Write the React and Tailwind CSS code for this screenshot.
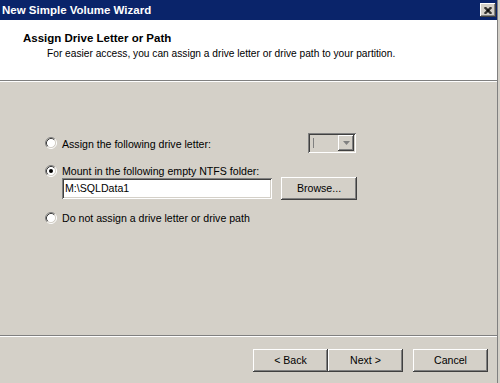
import React from "react";

const raised =
  "shadow-[inset_-1px_-1px_#404040,inset_1px_1px_#ffffff,inset_-2px_-2px_#808080,inset_2px_2px_#d4d0c8]";
const sunken =
  "shadow-[inset_1px_1px_#808080,inset_-1px_-1px_#ffffff,inset_2px_2px_#404040,inset_-2px_-2px_#d4d0c8]";

const Radio = ({ checked }) => (
  <svg width="12" height="12" viewBox="0 0 12 12" className="shrink-0">
    <circle cx="6" cy="6" r="4.5" fill="#ffffff" />
    <path d="M2.11 9.89 A5.5 5.5 0 0 1 9.89 2.11" fill="none" stroke="#808080" />
    <path d="M9.89 2.11 A5.5 5.5 0 0 1 2.11 9.89" fill="none" stroke="#ffffff" />
    <path d="M2.82 9.18 A4.5 4.5 0 0 1 9.18 2.82" fill="none" stroke="#404040" />
    <path d="M9.18 2.82 A4.5 4.5 0 0 1 2.82 9.18" fill="none" stroke="#d4d0c8" />
    {checked && <circle cx="6" cy="6" r="2" fill="#000000" />}
  </svg>
);

const Button = ({ children, className = "" }) => (
  <button
    className={`h-[23px] w-[75px] bg-[#d4d0c8] text-black ${raised} ${className}`}
  >
    {children}
  </button>
);

export default function App() {
  return (
    <div className="w-[500px] h-[383px] flex bg-[#d4d0c8] font-['Liberation_Sans',Arial,sans-serif] text-[10.6px] leading-[13px] text-black overflow-hidden">
      <div className="w-[497px] flex flex-col">
        {/* title bar */}
        <div className="h-[20px] bg-[#0a246a] flex items-center justify-between pl-[2px] pr-[1px]">
          <span className="text-white font-bold text-[11.5px]">New Simple Volume Wizard</span>
          <div className={`w-[16px] h-[14px] bg-[#d4d0c8] flex items-center justify-center ${raised}`}>
            <svg width="8" height="7" viewBox="0 0 8 7">
              <path d="M0.5 0 L7.5 7 M1.5 0 L7.5 6 M0.5 1 L6.5 7 M7.5 0 L0.5 7 M6.5 0 L0.5 6 M7.5 1 L1.5 7" stroke="#000" strokeWidth="1" fill="none" />
            </svg>
          </div>
        </div>

        {/* header */}
        <div className="h-[60px] bg-white pt-[12px]">
          <div className="pl-[23px] font-bold text-[11.5px]">Assign Drive Letter or Path</div>
          <div className="pl-[47px] pt-[2px] text-[10.2px]">
            For easier access, you can assign a drive letter or drive path to your partition.
          </div>
        </div>
        <div className="h-[2px] border-t border-[#808080] border-b border-b-white" />

        {/* content */}
        <div className="h-[253px] pt-[51px] pl-[45px]">
          <div className="w-[311px] h-[20px] flex items-center justify-between">
            <div className="flex items-center gap-[5px]">
              <Radio />
              <span className="pt-[2px]">Assign the following drive letter:</span>
            </div>
            <div className={`w-[48px] h-[20px] flex items-center p-[2px] ${sunken}`}>
              <div className="flex-1 h-full flex items-center pl-[3px]">
                <div className="w-px h-[10px] bg-[#808080]" />
              </div>
              <div className={`w-[16px] h-[16px] bg-[#d4d0c8] flex items-center justify-center ${raised}`}>
                <svg width="7" height="4" viewBox="0 0 7 4">
                  <path d="M0 0 H7 L3.5 4 Z" fill="#808080" />
                </svg>
              </div>
            </div>
          </div>

          <div className="mt-[11px] flex items-center gap-[5px] h-[13px]">
            <Radio checked />
            <span className="pt-[2px]">Mount in the following empty NTFS folder:</span>
          </div>

          <div className="pl-[17px] flex items-center gap-[9px]">
            <div className={`w-[210px] h-[21px] bg-white flex items-center pl-[3px] ${sunken}`}>
              M:\SQLData1
            </div>
            <Button className="w-[76px]">Browse...</Button>
          </div>

          <div className="mt-[11px] flex items-center gap-[5px] h-[13px]">
            <Radio />
            <span className="pt-[2px]">Do not assign a drive letter or drive path</span>
          </div>
        </div>

        {/* separator */}
        <div className="h-[2px] border-t border-[#808080] border-b border-b-white" />

        {/* footer */}
        <div className="h-[46px] pt-[12px] flex justify-end pr-[9px]">
          <Button>&lt; Back</Button>
          <Button>Next &gt;</Button>
          <Button className="ml-[10px]">Cancel</Button>
        </div>
      </div>
      <div className="w-[3px] border-l border-[#808080] bg-[#d4d0c8]" />
    </div>
  );
}
